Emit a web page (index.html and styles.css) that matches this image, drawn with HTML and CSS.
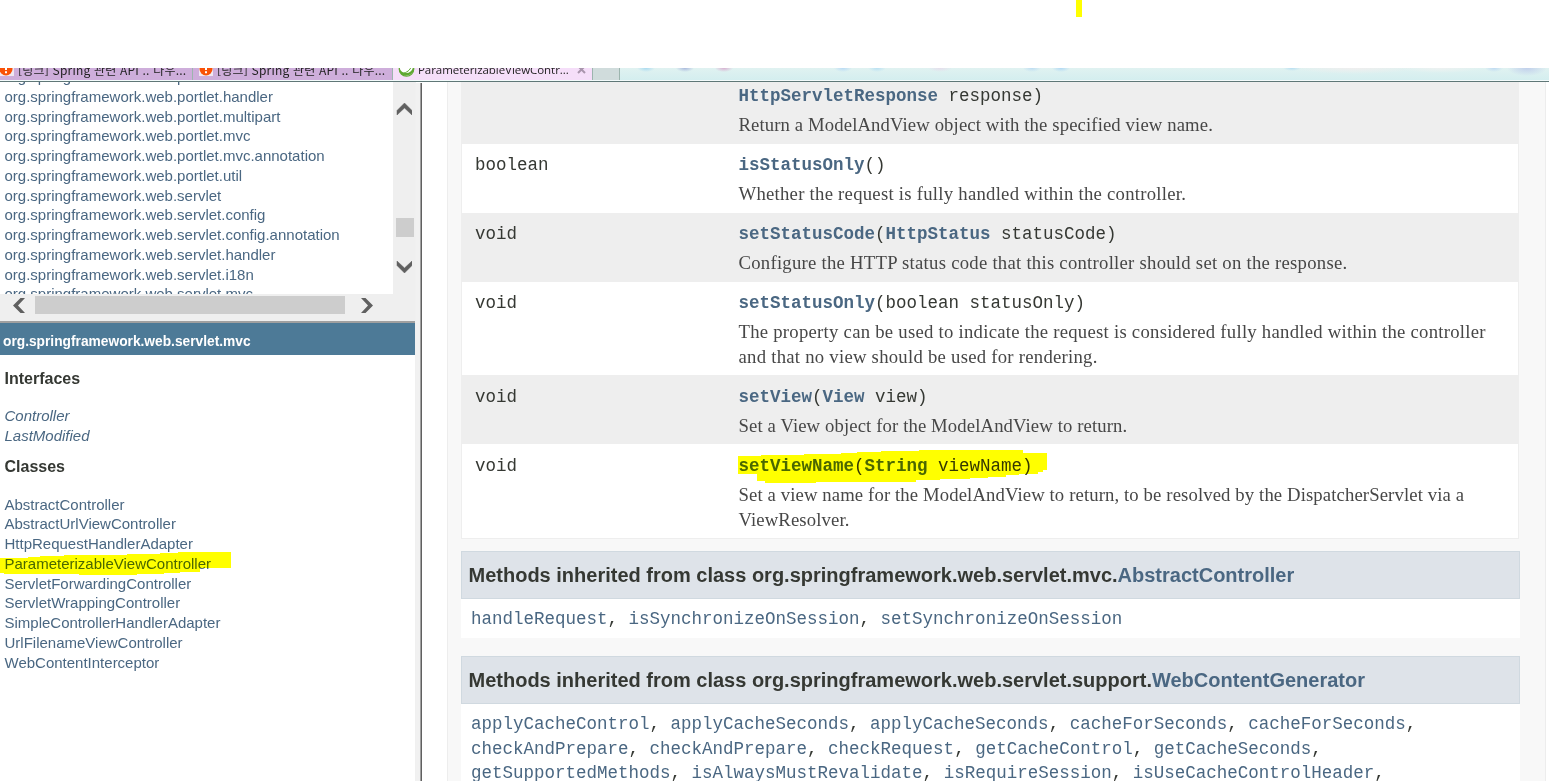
FILE: index.html
```html
<!DOCTYPE html>
<html lang="ko">
<head>
<meta charset="utf-8">
<title>ParameterizableViewController</title>
<link rel="stylesheet" href="styles.css">
</head>
<body>
<div class="top"><span class="mark"></span></div>
<div class="tabs">
  <div class="tab first">
    <svg class="ico" width="14" height="14" viewBox="0 0 14 14"><rect width="14" height="14" fill="#efe8f2"/><circle cx="6" cy="7" r="6.5" fill="#f95208"/><path d="M6 3v5M6 9.3v2" stroke="#fff" stroke-width="2"/></svg>
    <span class="label">[링크] Spring 관련 API .. 나우...</span>
  </div>
  <div class="tab second">
    <svg class="ico" width="14" height="14" viewBox="0 0 14 14"><rect width="14" height="14" fill="#efe8f2"/><circle cx="7" cy="7" r="6.5" fill="#f95208"/><path d="M7 3v5M7 9.3v2" stroke="#fff" stroke-width="2"/></svg>
    <span class="label">[링크] Spring 관련 API .. 나우...</span>
  </div>
  <div class="tab active">
    <svg class="ico" width="17" height="16" viewBox="0 0 17 16"><circle cx="8.500" cy="8" r="7.200" fill="#fff" stroke="#5fa832" stroke-width="1.300"/><path d="M1.500 7V11L4 14C8 15.800 14 14 15.800 9.500L15 5C15 9 12.500 12 8 12C5 12 2.500 10.500 1.500 7Z" fill="#5fa832"/><path d="M4 12.500C9 11.500 12 9.500 13.500 5" fill="none" stroke="#5fa832"/></svg>
    <span class="label title">ParameterizableViewContr...</span>
    <svg class="close" width="9" height="9" viewBox="0 0 9 9"><path d="M1 1L8 8M8 1L1 8" stroke="#a995ad" stroke-width="2"/></svg>
  </div>
  <div class="newtab"></div>
  <div class="sky"></div>
</div>
<div class="frames">
  <aside class="side">
    <div class="packages">
      <div class="view">
        <ul class="list">
          <li>org.springframework.web.portlet</li>
          <li>org.springframework.web.portlet.handler</li>
          <li>org.springframework.web.portlet.multipart</li>
          <li>org.springframework.web.portlet.mvc</li>
          <li>org.springframework.web.portlet.mvc.annotation</li>
          <li>org.springframework.web.portlet.util</li>
          <li>org.springframework.web.servlet</li>
          <li>org.springframework.web.servlet.config</li>
          <li>org.springframework.web.servlet.config.annotation</li>
          <li>org.springframework.web.servlet.handler</li>
          <li>org.springframework.web.servlet.i18n</li>
          <li>org.springframework.web.servlet.mvc</li>
        </ul>
        <div class="vbar">
          <svg width="16" height="12" viewBox="0 0 16 12"><path d="M1 7.500L8.500 0L16 7.500V12L8.500 5L1 12Z" fill="#606060" stroke="#606060" stroke-width=".5"/></svg>
          <div class="vthumb"></div>
          <svg width="16" height="12" viewBox="0 0 16 12"><path d="M1 4.500L8.500 12L16 4.500V0L8.500 7L1 0Z" fill="#606060" stroke="#606060" stroke-width=".5"/></svg>
        </div>
      </div>
      <div class="hbar">
        <svg width="12" height="15" viewBox="0 0 12 15"><path d="M7.500 0L0 7.500L7.500 15H12L5 7.500L12 0Z" fill="#606060"/></svg>
        <div class="hthumb"></div>
        <svg width="12" height="15" viewBox="0 0 12 15"><path d="M4.500 0L12 7.500L4.500 15H0L7 7.500L0 0Z" fill="#606060"/></svg>
      </div>
    </div>
    <div class="pkg">org.springframework.web.servlet.mvc</div>
    <div class="classes">
      <h2>Interfaces</h2>
      <ul class="list ital"><li>Controller</li><li>LastModified</li></ul>
      <h2 class="h-classes">Classes</h2>
      <ul class="list cls">
        <li>AbstractController</li>
        <li>AbstractUrlViewController</li>
        <li>HttpRequestHandlerAdapter</li>
        <li class="hl">ParameterizableViewController<svg class="pen penside" width="232" height="26" viewBox="0 0 232 26"><path d="M0 8H28V7H40V6H64V5H127V4H160V3H178V2H231V18H200V22H180V23H164V24H137V25H79V24H4V23H0Z" fill="#ff0"/></svg></li>
        <li>ServletForwardingController</li>
        <li>ServletWrappingController</li>
        <li>SimpleControllerHandlerAdapter</li>
        <li>UrlFilenameViewController</li>
        <li>WebContentInterceptor</li>
      </ul>
    </div>
  </aside>
  <div class="split"></div>
  <main class="main">
    <div class="content">
      <div class="table">
        <div class="row r0 alt"><div class="type"></div><div class="desc"><code><b>HttpServletResponse</b> response)</code><p class="tight">Return a ModelAndView object with the specified view name.</p></div></div>
        <div class="row r1"><div class="type">boolean</div><div class="desc"><code><b>isStatusOnly</b>()</code><p>Whether the request is fully handled within the controller.</p></div></div>
        <div class="row r1 alt"><div class="type">void</div><div class="desc"><code><b>setStatusCode</b>(<b>HttpStatus</b> statusCode)</code><p>Configure the HTTP status code that this controller should set on the response.</p></div></div>
        <div class="row r2 short"><div class="type">void</div><div class="desc"><code><b>setStatusOnly</b>(boolean statusOnly)</code><p>The property can be used to indicate the request is considered fully handled within the controller<br>and that no view should be used for rendering.</p></div></div>
        <div class="row r1 alt low"><div class="type">void</div><div class="desc"><code><b>setView</b>(<b>View</b> view)</code><p class="tight">Set a View object for the ModelAndView to return.</p></div></div>
        <div class="row r2 low"><div class="type">void</div><div class="desc"><code class="hl"><b>setViewName</b>(<b>String</b> viewName)<svg class="pen penmain" width="310" height="36" viewBox="0 0 310 36"><path d="M0 8H23V7H66V6H103V5H119V4H143V3H181V2H285V5H309V22H305V24H300V26H281V27H268V29H250V30H232V31H202V32H178V34H78V35H27V33H19V26H0Z" fill="#ff0"/></svg></code><p class="tight">Set a view name for the ModelAndView to return, to be resolved by the DispatcherServlet via a<br>ViewResolver.</p></div></div>
      </div>
      <section class="inherited">
        <h3>Methods inherited from class org.springframework.web.servlet.mvc.<span>AbstractController</span></h3>
        <div class="links"><a>handleRequest</a>, <a>isSynchronizeOnSession</a>, <a>setSynchronizeOnSession</a></div>
      </section>
      <section class="inherited last">
        <h3>Methods inherited from class org.springframework.web.servlet.support.<span>WebContentGenerator</span></h3>
        <div class="links"><a>applyCacheControl</a>, <a>applyCacheSeconds</a>, <a>applyCacheSeconds</a>, <a>cacheForSeconds</a>, <a>cacheForSeconds</a>,<br><a>checkAndPrepare</a>, <a>checkAndPrepare</a>, <a>checkRequest</a>, <a>getCacheControl</a>, <a>getCacheSeconds</a>,<br><a>getSupportedMethods</a>, <a>isAlwaysMustRevalidate</a>, <a>isRequireSession</a>, <a>isUseCacheControlHeader</a>,</div>
      </section>
    </div>
  </main>
</div>
</body>
</html>
```
FILE: styles.css
```css
* { box-sizing: border-box; }
body { margin: 0; height: 781px; overflow: hidden; background: #fff; font-family: "Liberation Sans", Arial, sans-serif; display: flex; flex-direction: column; }
ul, h2, h3, p { margin: 0; padding: 0; }
ul { list-style: none; }
.top { height: 68px; flex: none; padding-left: 1076px; }
.mark { display: block; width: 6px; height: 17px; background: #ff0; }

.tabs { height: 14px; flex: none; display: flex; overflow: hidden; border-bottom: 1px solid #5f7777; padding-bottom: 1px; background: #f3fbfb; }
.tab { display: flex; align-items: flex-start; overflow: hidden; border-right: 1px solid #9cb5ae; background: #ceaedb; }
.first { width: 193px; }
.second { width: 200px; padding-left: 6px; }
.active { width: 200px; background: #f5def9; padding-left: 5px; }
.ico { flex: none; margin-top: -6px; }
.active .ico { margin-top: -7px; }
.label { font: 12px/16px "Noto Sans CJK KR", sans-serif; letter-spacing: .2px; color: #222; white-space: nowrap; margin: -6px 0 0 4px; width: 170px; flex: none; }
.title { font-family: "Open Sans", sans-serif; font-size: 11.500px; letter-spacing: -.05px; margin-left: 3px; width: 151px; }
.close { margin: -3px 0 0 8px; flex: none; }
.newtab { width: 27px; background: #d0dcdc; border-right: 1px solid #9cb5ae; }
.sky { flex: 1; background:
  radial-gradient(ellipse 9px 4px at 26px 0, #a9daf0, transparent),
  radial-gradient(ellipse 9px 4px at 65px 0, #a9b8dc, transparent),
  radial-gradient(ellipse 9px 4px at 104px 0, #d8afd0, transparent),
  radial-gradient(ellipse 9px 4px at 223px 0, #b8daf5, transparent),
  radial-gradient(ellipse 9px 4px at 257px 0, #b8e0f3, transparent),
  radial-gradient(ellipse 12px 4px at 320px 0, #e5ddeb, transparent),
  radial-gradient(ellipse 9px 4px at 412px 0, #bcdcf2, transparent),
  radial-gradient(ellipse 9px 4px at 441px 0, #b0d8f4, transparent),
  radial-gradient(ellipse 9px 3px at 672px 0, #b7def2, transparent),
  radial-gradient(ellipse 60px 6px at 735px 0, #efeeee, transparent),
  radial-gradient(ellipse 40px 5px at 820px 0, #edf1f1, transparent),
  radial-gradient(ellipse 9px 4px at 874px 0, #bed9f2, transparent),
  radial-gradient(ellipse 20px 8px at 907px 0, #c0cfeb, transparent),
  linear-gradient(#e0f2f1, #d4eeef); }

.frames { flex: 1; display: flex; min-height: 0; }
.side { width: 416px; flex: none; display: flex; flex-direction: column; border-right: 1px solid #f0f0f0; }
.packages { height: 241px; flex: none; background: #efefef; border-bottom: 2px solid #a0a0a0; display: flex; flex-direction: column; }
.view { height: 212px; display: flex; }
.list { color: #4a6782; font-size: 15px; line-height: 19.750px; padding-left: 4.500px; white-space: nowrap; }
.view .list { width: 393px; background: #fff; overflow: hidden; }
.view .list li:first-child { margin-top: -14.900px; }
.vbar { width: 22px; padding: 21px 0 0 3px; }
.vbar svg, .vthumb { display: block; }
.vthumb { width: 18px; height: 19px; margin: 103px 0 24px; background: #cdcdcd; }
.hbar { height: 27px; padding: 2px 0 0 13px; display: flex; align-items: flex-start; }
.hbar svg { margin-top: 2px; }
.hthumb { width: 310px; height: 18px; background: #cdcdcd; margin: 0 16px 0 10px; }
.pkg { height: 32px; flex: none; background: #4d7a97; color: #fff; font-weight: bold; font-size: 13.750px; line-height: 38px; padding-left: 3px; white-space: nowrap; }
.classes h2 { font-size: 16px; line-height: 20px; color: #353833; padding: 14px 0 0 4.500px; }
.ital { padding-top: 17px; font-style: italic; }
.classes .h-classes { padding-top: 11px; }
.cls { padding-top: 18px; }
.hl { position: relative; }
.pen { position: absolute; mix-blend-mode: multiply; }
.penside { left: -4.500px; top: -4px; }
.penmain { left: -1px; top: -4px; }

.split { width: 6px; flex: none; border-left: 4px solid #f1f1f1; border-right: 1px solid #606060; background: #a0a0a0; margin-top: 1px; }
.main { flex: 1; padding: 0 3px 0 25px; min-width: 0; }
.content { height: 100%; background: #f8f8f8; border: solid #ededed; border-width: 0 1px; padding: 0 25px 0 13px; overflow: hidden; }
.table { border: 1px solid #eee; border-top: 0; background: #fff; width: 1058px; }
.row { display: flex; padding-left: 13px; }
.alt { background: #eee; }
.r0 { height: 62px; }
.r1 { height: 69px; padding-top: 7px; }
.r2 { height: 94px; padding-top: 7px; }
.short { height: 93px; }
.low { padding-top: 8px; }
.type { width: 263.500px; flex: none; }
.type, .desc code, .links { font-family: "Liberation Mono", "Courier New", monospace; font-size: 17.500px; color: #353833; white-space: pre; }
.type { line-height: 28px; }
.desc code { display: block; line-height: 28px; height: 28px; }
.desc b { color: #4a6782; }
.desc p { font: 18.700px/24.500px "Liberation Serif", Georgia, serif; letter-spacing: .26px; color: #474747; white-space: nowrap; padding-top: 3px; }
.desc .tight { letter-spacing: .12px; }
.inherited { width: 1059px; margin-top: 12px; }
.inherited h3 { height: 48px; background: #dee3e9; border: 1px solid #d0d9e0; color: #353833; font-size: 20px; line-height: 47px; padding-left: 6.500px; white-space: nowrap; }
.inherited h3 span, .links a { color: #4a6782; }
.links { background: #fff; height: 39px; line-height: 24.500px; padding: 8px 0 0 10px; }
.last { margin-top: 18px; }
.last .links { height: 90px; }
```
